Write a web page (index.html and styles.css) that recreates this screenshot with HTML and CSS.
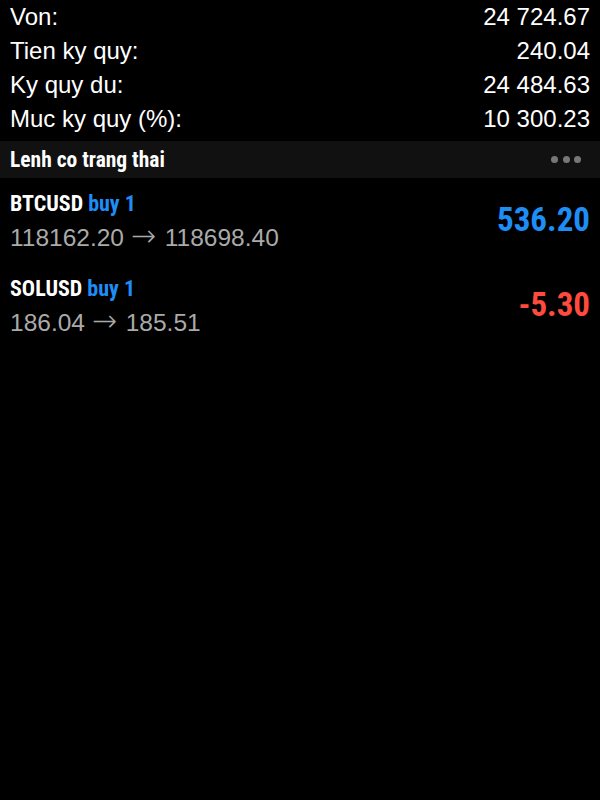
FILE: index.html
```html
<!DOCTYPE html>
<html lang="vi">
<head>
    <meta charset="UTF-8">
    <meta name="viewport" content="width=device-width, initial-scale=1.0">
    <title>Lenh co trang thai</title>
    <link rel="stylesheet" href="styles.css">
</head>
<body>
    <div class="summary">
        <div class="row"><span>Von:</span><span>24 724.67</span></div>
        <div class="row"><span>Tien ky quy:</span><span>240.04</span></div>
        <div class="row"><span>Ky quy du:</span><span>24 484.63</span></div>
        <div class="row"><span>Muc ky quy (%):</span><span>10 300.23</span></div>
    </div>

    <div class="section-head">
        <span class="section-title">Lenh co trang thai</span>
        <span class="dots"><i></i><i></i><i></i></span>
    </div>

    <div class="order">
        <div class="order-info">
            <div class="symbol">BTCUSD <span class="side">buy 1</span></div>
            <div class="prices">118162.20 <span class="arrow">→</span> 118698.40</div>
        </div>
        <div class="profit up">536.20</div>
    </div>

    <div class="order">
        <div class="order-info">
            <div class="symbol">SOLUSD <span class="side">buy 1</span></div>
            <div class="prices">186.04 <span class="arrow">→</span> 185.51</div>
        </div>
        <div class="profit down">-5.30</div>
    </div>
</body>
</html>
```

FILE: styles.css
```css
body {
    margin: 0;
    background: #000;
    color: #fff;
    font-family: "Liberation Sans", Arial, sans-serif;
}
.summary {
    padding: 0 10px;
}
.row {
    display: flex;
    justify-content: space-between;
    height: 34px;
    line-height: 34px;
    font-size: 24px;
}
.section-head {
    display: flex;
    justify-content: space-between;
    align-items: center;
    margin-top: 5px;
    height: 37px;
    padding: 0 10px;
    background: #111;
}
.section-title {
    font-family: Roboto, sans-serif;
    font-stretch: 75%;
    font-weight: bold;
    font-size: 21.5px;
}
.dots {
    display: flex;
    gap: 4.5px;
    margin-right: 9px;
}
.dots i {
    width: 7px;
    height: 7px;
    border-radius: 50%;
    background: #777;
}
.order {
    display: flex;
    justify-content: space-between;
    align-items: center;
    padding: 9px 10px 8px;
}
.symbol {
    height: 34px;
    line-height: 34px;
    font-family: Roboto, sans-serif;
    font-stretch: 78%;
    font-weight: bold;
    font-size: 22px;
}
.side {
    color: #1e8ef6;
}
.prices {
    height: 34px;
    line-height: 34px;
    font-size: 24.5px;
    color: #aaa;
}
.arrow {
    font-family: "DejaVu Sans", sans-serif;
    font-size: 30px;
    font-weight: 200;
    line-height: 0;
    margin-right: 2px;
}
.profit {
    font-family: Roboto, sans-serif;
    font-stretch: 75%;
    font-weight: bold;
    font-size: 33px;
    margin-bottom: 4px;
}
.profit.up {
    color: #1e8ef6;
}
.profit.down {
    color: #ff4b3e;
}
```
